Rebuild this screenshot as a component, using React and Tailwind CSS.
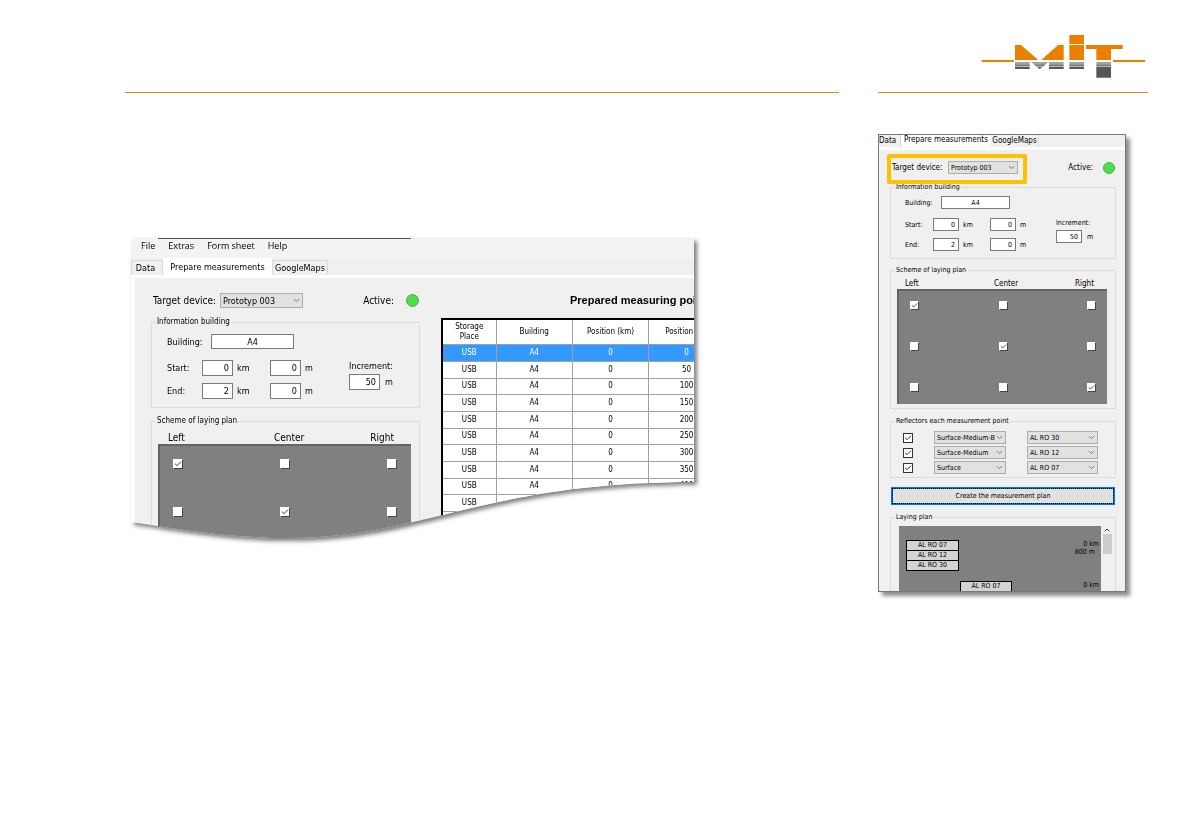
import { Check, ChevronDown, ChevronUp } from "lucide-react";
import clsx from "clsx";

// Class sets for the two window sizes
const large = {
  tab: "text-[9px] leading-3",
  label: "text-[10px] leading-3",
  text: "text-[9px] leading-3",
  legend: "text-[8px] leading-3",
  group: "w-[269px]",
  targetRow: "h-[15px] w-[269px]",
  targetLabel: "w-[69px] pl-0.5",
  targetSelect: "w-[83px] h-[15px]",
  led: "size-[13px]",
  groupGap: "mt-2",
  building: "pt-1.5 pl-[15px]",
  buildingLabel: "w-11",
  buildingInput: "w-[83px] h-[15px]",
  range: "pt-[11px] pb-2 pl-[15px]",
  rangeRows: "gap-[7px]",
  rangeLabel: "w-[35px]",
  number: "w-[31px] h-4",
  km: "w-[37px] pl-1",
  metre: "w-12 pl-1",
  incrementGap: "gap-0.5",
  head: "pt-[5px] pl-4 pr-[25px]",
  headLeft: "w-[106px]",
  plan: "ml-1.5 mr-2 pt-[13px] pb-3 pl-[13px] pr-3.5 gap-y-[38px]",
  box: "size-[10px]",
};

const small = {
  tab: "text-[8px] leading-[10px]",
  label: "text-[8px] leading-[10px]",
  text: "text-[7px] leading-[10px]",
  legend: "text-[7px] leading-[10px]",
  group: "w-[226px]",
  targetRow: "h-[13px] w-[226px]",
  targetLabel: "w-[58px] pl-0.5",
  targetSelect: "w-[70px] h-[13px]",
  led: "size-3",
  groupGap: "mt-2",
  building: "pt-1 pl-3.5",
  buildingLabel: "w-9",
  buildingInput: "w-[69px] h-[13px]",
  range: "pt-[9px] pb-[7px] pl-3.5",
  rangeRows: "gap-[7px]",
  rangeLabel: "w-7",
  number: "w-[26px] h-[13px]",
  km: "w-[31px] pl-1",
  metre: "w-10 pl-1",
  incrementGap: "gap-0.5",
  head: "pt-1 pl-3.5 pr-[21px]",
  headLeft: "w-[89px]",
  plan: "ml-1.5 mr-2 pt-2.5 pb-3 pl-[11px] pr-[11px] gap-y-8",
  box: "size-[9px]",
};

function Logo() {
  return (
    <svg viewBox="33 42 495 135" className="w-[165px] h-[45px]" role="img" aria-label="MIT">
      <g fill="#ea7f00">
        <rect x="35" y="120" width="97" height="6" />
        <rect x="429" y="120" width="96" height="6" />
        <polygon points="135,75 153,75 205,120 135,120" />
        <polygon points="264,75 281,75 281,120 214,120" />
        <rect x="298" y="45" width="44" height="27" />
        <rect x="298" y="75" width="44" height="45" />
        <path d="M348 75H458V87H423V120H379V87H348Z" />
      </g>
      <g fill="#a3a3a6">
        <path d="M135 126H179V132H135ZM184 126H234L229 132H190ZM237 126H281V132H237ZM298 126H342V132H298ZM379 126H423V132H379Z" />
      </g>
      <g fill="#77777a">
        <path d="M135 133H179V139H135ZM191 133H228L221 139H198ZM237 133H281V139H237ZM298 133H342V139H298ZM379 133H423V139H379Z" />
      </g>
      <g fill="#57575a">
        <path d="M135 140H179V147H135ZM200 140H218L209 147ZM237 140H281V147H237ZM298 140H342V147H298ZM379 140H423V173H379Z" />
      </g>
    </svg>
  );
}

function Tick({ className, label, checked, outlined }) {
  return (
    <span className={clsx("grid", className)}>
      <input
        type="checkbox"
        aria-label={label}
        defaultChecked={checked}
        className={clsx(
          "peer col-start-1 row-start-1 appearance-none size-full bg-white border",
          outlined ? "border-[#333]" : "border-white border-r-[#444] border-b-[#444]"
        )}
      />
      <Check
        strokeWidth={3}
        className="col-start-1 row-start-1 size-full p-px text-[#333] hidden peer-checked:block pointer-events-none"
      />
    </span>
  );
}

function Select({ id, label, value, className, textClass }) {
  return (
    <span className={clsx("grid shrink-0", className)}>
      <select
        id={id}
        aria-label={label}
        defaultValue={value}
        className={clsx(
          "col-start-1 row-start-1 appearance-none size-full min-w-0 bg-[#e1e1e1] border border-[#adadad] pl-0.5 pr-2.5",
          textClass
        )}
      >
        <option>{value}</option>
      </select>
      <ChevronDown
        size={9}
        strokeWidth={2}
        className="col-start-1 row-start-1 justify-self-end self-center mr-0.5 text-[#555] pointer-events-none"
      />
    </span>
  );
}

function TextBox({ id, label, value, className }) {
  return (
    <input
      id={id}
      aria-label={label}
      defaultValue={value}
      className={clsx("bg-white border border-[#7a7a7a] px-[3px]", className)}
    />
  );
}

function Group({ title, s, className, children }) {
  return (
    <fieldset className={clsx("border border-[#dcdcdc] min-w-0", s.group, className)}>
      <legend className={clsx("ml-1 px-px", s.legend)}>{title}</legend>
      {children}
    </fieldset>
  );
}

function TargetRow({ s, prefix, highlight }) {
  return (
    <div className={clsx("relative flex items-center", s.targetRow)}>
      <label htmlFor={`${prefix}-target`} className={clsx("whitespace-nowrap shrink-0", s.targetLabel, s.label)}>
        Target device:
      </label>
      <Select id={`${prefix}-target`} value="Prototyp 003" className={s.targetSelect} textClass={s.text} />
      <span className={clsx("ml-auto", s.label)}>Active:</span>
      <span
        className={clsx(
          "rounded-full border border-[#4bb04b] bg-[#4fdc4f]",
          s.led,
          highlight ? "ml-2.5 mr-px" : "ml-3 mr-px"
        )}
      />
      {highlight && (
        <div className="absolute -left-[3px] -top-[7px] w-[140px] h-[30px] border-4 border-[#ffc000] rounded-xs pointer-events-none z-10" />
      )}
    </div>
  );
}

function RangeRow({ s, prefix, name, km }) {
  return (
    <div className="flex items-center">
      <label htmlFor={`${prefix}-${name}`} className={s.rangeLabel}>
        {name}:
      </label>
      <TextBox id={`${prefix}-${name}`} value={km} className={clsx("text-right", s.number)} />
      <span className={s.km}>km</span>
      <TextBox label={`${name} m`} value="0" className={clsx("text-right", s.number)} />
      <span className={s.metre}>m</span>
    </div>
  );
}

function BuildingGroup({ s, prefix }) {
  return (
    <Group title="Information building" s={s} className={s.groupGap}>
      <div className={s.text}>
        <div className={clsx("flex items-center", s.building)}>
          <label htmlFor={`${prefix}-building`} className={s.buildingLabel}>
            Building:
          </label>
          <TextBox id={`${prefix}-building`} value="A4" className={clsx("text-center", s.buildingInput)} />
        </div>
        <div className={clsx("flex items-start", s.range)}>
          <div className={clsx("flex flex-col", s.rangeRows)}>
            <RangeRow s={s} prefix={prefix} name="Start" km="0" />
            <RangeRow s={s} prefix={prefix} name="End" km="2" />
          </div>
          <div className={clsx("flex flex-col", s.incrementGap)}>
            <label htmlFor={`${prefix}-increment`}>Increment:</label>
            <div className="flex items-center">
              <TextBox id={`${prefix}-increment`} value="50" className={clsx("text-right", s.number)} />
              <span className="pl-[5px]">m</span>
            </div>
          </div>
        </div>
      </div>
    </Group>
  );
}

function SchemeGroup({ s, className }) {
  return (
    <Group title="Scheme of laying plan" s={s} className={className}>
      <div className={clsx("flex", s.head, s.label)}>
        <span className={s.headLeft}>Left</span>
        <span>Center</span>
        <span className="ml-auto">Right</span>
      </div>
      <div
        className={clsx(
          "grid grid-cols-3 bg-[#808080] border-t-2 border-l-2 border-[#646464]",
          s.plan
        )}
      >
        {[0, 1, 2].map((row) =>
          ["Left", "Center", "Right"].map((side, col) => (
            <Tick
              key={`${row}-${side}`}
              label={`${side} ${row + 1}`}
              checked={row === col}
              className={clsx(
                s.box,
                col === 1 && "justify-self-center",
                col === 2 && "justify-self-end"
              )}
            />
          ))
        )}
      </div>
    </Group>
  );
}

const measuringPoints = [0, 50, 100, 150, 200, 250, 300, 350, 400, 450, 500];

function PointsTable() {
  return (
    <div className="ml-[21px] shrink-0 w-[285px]">
      <h2 className="pl-[129px] pt-[15px] pb-[10px] font-['Liberation_Sans',sans-serif] text-[11px] leading-[15px] font-bold whitespace-nowrap">
        Prepared measuring points
      </h2>
      <table className="table-fixed w-full border-collapse bg-white border-2 border-black text-[8px] leading-[10px] text-center">
        <thead>
          <tr className="h-[25px]">
            <th className="w-[54px] font-normal border border-[#a0a0a0] p-0">
              Storage
              <br />
              Place
            </th>
            <th className="font-normal border border-[#a0a0a0] p-0">Building</th>
            <th className="font-normal border border-[#a0a0a0] p-0">Position (km)</th>
            <th className="font-normal border border-[#a0a0a0] p-0">Position (m)</th>
          </tr>
        </thead>
        <tbody>
          {measuringPoints.map((position, i) => (
            <tr
              key={position}
              className={clsx("h-[17px] nth-[3n]:h-4", i === 0 && "bg-[#3399ff] text-white")}
            >
              <td className="border border-[#a0a0a0] p-0">USB</td>
              <td className="border border-[#a0a0a0] p-0">A4</td>
              <td className="border border-[#a0a0a0] p-0">0</td>
              <td className="border border-[#a0a0a0] p-0">{position}</td>
            </tr>
          ))}
        </tbody>
      </table>
    </div>
  );
}

function MainWindow() {
  return (
    <div className="ml-1.5 mt-[145px] max-w-[563px] [filter:drop-shadow(3px_3px_2px_rgba(0,0,0,0.5))]">
      <svg width="0" height="0" className="absolute" aria-hidden="true">
        <clipPath id="wave" clipPathUnits="objectBoundingBox" transform="scale(0.00177620 0.00328947)">
          <path d="M0 6Q0 0 6 0H563V244C350 244 290 302 150 300C90 299 40 290 0 284Z" />
        </clipPath>
      </svg>
      <div className="h-76 overflow-hidden bg-[#f0f0f0] [clip-path:url(#wave)]">
        <div className="h-px ml-[27px] w-[253px] bg-[#555]" />
        <nav className="flex items-start gap-[13px] h-[19px] pl-2.5 bg-[#f3f3f3] font-['Open_Sans',sans-serif] text-[9px] leading-[14px]">
          <button>File</button>
          <button>Extras</button>
          <button>Form sheet</button>
          <button>Help</button>
        </nav>
        <div className={clsx("flex items-end h-[17px]", large.tab)}>
          <button className="w-8 h-[15px] pr-[3px] border border-b-0 border-[#d9d9d9]">Data</button>
          <button className="w-[109px] h-[17px] bg-white whitespace-nowrap">Prepare measurements</button>
          <button className="w-[56px] h-[15px] border border-b-0 border-[#d9d9d9] whitespace-nowrap">GoogleMaps</button>
        </div>
        <div className="border-t-[3px] border-l-4 border-white pl-4 flex">
          <div className="pt-[15px] shrink-0">
            <TargetRow s={large} prefix="main" />
            <BuildingGroup s={large} prefix="main" />
            <SchemeGroup s={large} className="mt-[7px]" />
          </div>
          <PointsTable />
        </div>
      </div>
    </div>
  );
}

const reflectors = [
  { place: "Surface-Medium-Base", type: "AL RO 30" },
  { place: "Surface-Medium", type: "AL RO 12" },
  { place: "Surface", type: "AL RO 07" },
];

function DetailWindow() {
  return (
    <div className="mt-[41px] w-[248px] h-[458px] overflow-hidden bg-[#f0f0f0] border border-[#777] shadow-[4px_4px_4px_rgba(0,0,0,0.45)]">
      <div className={clsx("flex items-end h-3", small.tab)}>
        <button className="w-[22px] h-3 pr-1.5 border-r border-[#d9d9d9]">Data</button>
        <button className="w-[90px] h-3 pb-0.5 bg-white whitespace-nowrap">Prepare measurements</button>
        <button className="w-[48px] h-3 border-r border-[#d9d9d9] whitespace-nowrap">GoogleMaps</button>
      </div>
      <div className="border-t-[3px] border-white pt-[11px] pl-[11px]">
        <TargetRow s={small} prefix="detail" highlight />
        <BuildingGroup s={small} prefix="detail" />
        <SchemeGroup s={small} className="mt-1.5 pb-1" />

        <Group title="Reflectors each measurement point" s={small} className="mt-[7px]">
          <div className="flex flex-col gap-0.5 pt-[5px] pb-[3px] pl-3">
            {reflectors.map(({ place, type }) => (
              <div key={type} className="flex items-center">
                <Tick className="size-[10px]" label={`Use ${place}`} checked outlined />
                <Select label="Place" value={place} className="ml-[21px] w-[72px] h-[13px]" textClass={small.text} />
                <Select label="Reflector" value={type} className="ml-[21px] w-[71px] h-[13px]" textClass={small.text} />
              </div>
            ))}
          </div>
        </Group>

        <button className="mt-[9px] ml-px w-[224px] h-[18px] bg-[#e1e1e1] border-2 border-[#0078d7] outline-1 outline-dotted outline-black -outline-offset-2 text-[7px] leading-[10px] block">
          Create the measurement plan
        </button>

        <Group title="Laying plan" s={small} className="mt-[7px]">
          <div className="flex pt-1 pl-2 text-[7px] leading-[8px]">
            <div className="w-[202px] h-24 bg-[#808080] pt-3.5 pl-[7px] pr-0.5">
              <div className="flex justify-between">
                <div className="w-[53px] border border-black bg-[#d4d4d4] divide-y divide-black text-center leading-[9px]">
                  <div>AL RO 07</div>
                  <div>AL RO 12</div>
                  <div>AL RO 30</div>
                </div>
                <div className="text-right">
                  <div>0 km</div>
                  <div className="pr-1">800 m</div>
                </div>
              </div>
              <div className="flex justify-between pt-2.5">
                <div className="ml-[54px] w-[52px] border border-black bg-[#d4d4d4] text-center leading-[9px]">AL RO 07</div>
                <div>0 km</div>
              </div>
            </div>
            <div className="w-3 flex flex-col items-center text-[#333]">
              <ChevronUp size={8} strokeWidth={3} />
              <div className="w-[9px] h-5 bg-[#cdcdcd]" />
            </div>
          </div>
        </Group>
      </div>
    </div>
  );
}

export default function App() {
  return (
    <div className="min-h-screen bg-white text-black pl-[125px] pr-[43px] flex gap-[39px] items-start font-['DejaVu_Sans_Condensed','Noto_Sans',sans-serif]">
      <main className="flex-1 min-w-0">
        <div className="h-[93px] border-b border-[#dc8c1e]" />
        <MainWindow />
      </main>
      <aside className="w-[270px] shrink-0">
        <div className="h-[93px] border-b border-[#dc8c1e] flex justify-end items-start pt-[34px] pr-0.5">
          <Logo />
        </div>
        <DetailWindow />
      </aside>
    </div>
  );
}
